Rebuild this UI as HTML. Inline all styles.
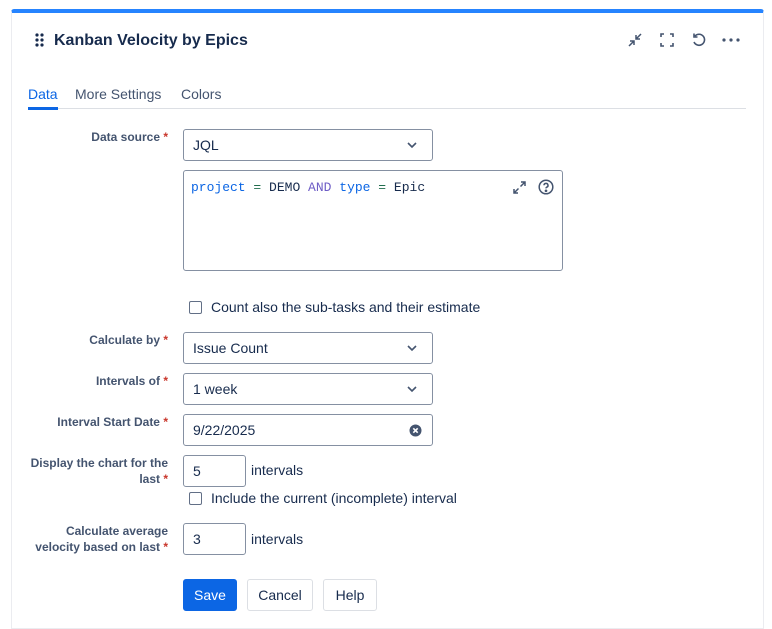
<!DOCTYPE html>
<html><head><style>
*{box-sizing:border-box;margin:0;padding:0}
body{width:772px;height:618px;background:#fff;font-family:"Liberation Sans",sans-serif;position:relative;overflow:hidden;color:#172b4d}
.a{position:absolute}
.panel{left:11px;top:9px;width:753px;height:620px;border:1px solid #ebecf0;border-top:4px solid #2684ff;border-radius:3px 3px 0 0}
.lbl{font-size:12px;font-weight:bold;color:#44546f;text-align:right;width:160px;left:8px;line-height:16px}
.lbl b{color:#c9372c}
.sel{left:183px;width:250px;height:32px;border:1px solid #8590a2;border-radius:3px;font-size:14px;padding:0 9px;line-height:30px}
.chev{position:absolute;right:14px;top:10px}
.cb{width:13px;height:13px;border:1.5px solid #626f86;border-radius:2px}
.t14{font-size:14px;color:#172b4d}
.btn{height:32px;border:1px solid #dcdfe4;border-radius:3px;font-size:14px;text-align:center;line-height:30px}
</style></head><body>
<div class="a panel"></div>
<svg class="a" style="left:35px;top:33px" width="10" height="14"><g fill="#172b4d"><circle cx="2" cy="2" r="1.6"/><circle cx="7" cy="2" r="1.6"/><circle cx="2" cy="7" r="1.6"/><circle cx="7" cy="7" r="1.6"/><circle cx="2" cy="12" r="1.6"/><circle cx="7" cy="12" r="1.6"/></g></svg>
<div class="a" style="left:54px;top:32px;font-size:16px;font-weight:bold;color:#172b4d">Kanban Velocity by Epics</div>
<svg class="a" style="left:627px;top:32px" width="16" height="16" fill="none" stroke="#44546f" stroke-width="1.5"><path d="M14 2L9 7M9 3v4h4M2 14l5-5M3 9h4v4"/></svg>
<svg class="a" style="left:659px;top:32px" width="16" height="16" fill="none" stroke="#44546f" stroke-width="1.6"><path d="M2 5V2h3M11 2h3v3M14 11v3h-3M5 14H2v-3"/></svg>
<svg class="a" style="left:691px;top:32px" width="16" height="16" fill="none" stroke="#44546f" stroke-width="1.6"><path d="M4 4a5.5 5.5 0 1 1-1 6M3 1.5v3.5h3.5"/></svg>
<svg class="a" style="left:722px;top:38px" width="18" height="4" fill="#44546f"><circle cx="2" cy="2" r="1.6"/><circle cx="9" cy="2" r="1.6"/><circle cx="16" cy="2" r="1.6"/></svg>
<div class="a" style="left:28px;top:108px;width:718px;height:1px;background:#dcdfe4"></div>
<div class="a" style="left:28px;top:86px;font-size:14px;color:#0c66e4">Data</div>
<div class="a" style="left:28px;top:107px;width:30px;height:3px;background:#0c66e4"></div>
<div class="a" style="left:75px;top:86px;font-size:14px;color:#44546f">More Settings</div>
<div class="a" style="left:181px;top:86px;font-size:14px;color:#44546f">Colors</div>

<div class="a lbl" style="top:129px">Data source <b>*</b></div>
<div class="a sel" style="top:129px">JQL<svg class="chev" width="12" height="10" fill="none" stroke="#44546f" stroke-width="1.6"><path d="M2 3l4 4 4-4"/></svg></div>
<div class="a" style="left:183px;top:170px;width:380px;height:101px;border:1px solid #8590a2;border-radius:3px"></div>
<div class="a" style="left:191px;top:180px;font-family:'Liberation Mono',monospace;font-size:13px;color:#172b4d"><span style="color:#0c66e4">project</span> <span style="color:#216e4e">=</span> DEMO <span style="color:#6e5dc6">AND</span> <span style="color:#0c66e4">type</span> <span style="color:#216e4e">=</span> Epic</div>
<svg class="a" style="left:512px;top:180px" width="15" height="15" fill="none" stroke="#44546f" stroke-width="1.5"><path d="M9 2h4v4M13 2L8.5 6.5M2 9v4h4M2 13l4.5-4.5"/></svg>
<svg class="a" style="left:538px;top:179px" width="16" height="16" fill="none" stroke="#44546f" stroke-width="1.5"><circle cx="8" cy="8" r="6.8"/><path d="M6 6.3a2 2 0 1 1 2.7 1.9c-.5.2-.7.6-.7 1.2"/><circle cx="8" cy="11.8" r=".6" fill="#44546f"/></svg>
<div class="a cb" style="left:189px;top:301px"></div>
<div class="a t14" style="left:211px;top:299px">Count also the sub-tasks and their estimate</div>

<div class="a lbl" style="top:332px">Calculate by <b>*</b></div>
<div class="a sel" style="top:332px">Issue Count<svg class="chev" width="12" height="10" fill="none" stroke="#44546f" stroke-width="1.6"><path d="M2 3l4 4 4-4"/></svg></div>
<div class="a lbl" style="top:373px">Intervals of <b>*</b></div>
<div class="a sel" style="top:373px">1 week<svg class="chev" width="12" height="10" fill="none" stroke="#44546f" stroke-width="1.6"><path d="M2 3l4 4 4-4"/></svg></div>
<div class="a lbl" style="top:414px">Interval Start Date <b>*</b></div>
<div class="a sel" style="top:414px">9/22/2025<svg class="a" style="right:10px;top:9px" width="13" height="13"><circle cx="6.5" cy="6.5" r="6" fill="#44546f"/><path d="M4.3 4.3l4.4 4.4M8.7 4.3L4.3 8.7" stroke="#fff" stroke-width="1.6"/></svg></div>
<div class="a lbl" style="top:455px">Display the chart for the<br>last <b>*</b></div>
<div class="a sel" style="top:455px;width:63px">5</div>
<div class="a t14" style="left:251px;top:462px">intervals</div>
<div class="a cb" style="left:189px;top:492px"></div>
<div class="a t14" style="left:211px;top:490px">Include the current (incomplete) interval</div>
<div class="a lbl" style="top:523px">Calculate average<br>velocity based on last <b>*</b></div>
<div class="a sel" style="top:523px;width:63px">3</div>
<div class="a t14" style="left:251px;top:531px">intervals</div>

<div class="a btn" style="left:183px;top:579px;width:54px;background:#0c66e4;border-color:#0c66e4;color:#fff">Save</div>
<div class="a btn" style="left:247px;top:579px;width:66px">Cancel</div>
<div class="a btn" style="left:323px;top:579px;width:54px">Help</div>
</body></html>
